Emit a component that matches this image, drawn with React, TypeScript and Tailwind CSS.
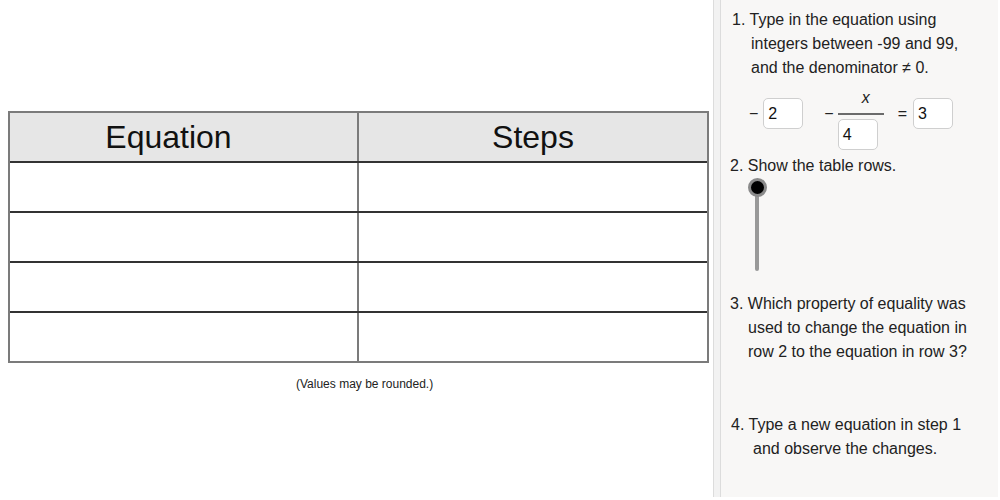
import React from "react";

const rows = [0, 1, 2, 3];

const InputBox = ({ value }: { value: string }) => (
  <div className="w-[40px] h-[31px] rounded-[5px] border border-[#cfcfcf] bg-white pl-[4px] text-[16px] leading-[29px] text-[#111]">
    {value}
  </div>
);

const App = () => {
  return (
    <div className="w-[1000px] h-[500px] bg-white flex font-['Liberation_Sans',Arial,sans-serif] text-[#222] overflow-hidden">
      {/* left graphics view */}
      <div className="w-[713px] shrink-0 pt-[111px] pl-[8px]">
        <div className="w-[701px] border-2 border-[#7b7b7b]">
          <div className="grid grid-cols-[349px_1fr] h-[50px] bg-[#e6e6e6] border-b-2 border-[#333]">
            <div className="border-r-2 border-[#7b7b7b] flex items-center justify-center pr-[30px] text-[32px] text-[#111]">
              Equation
            </div>
            <div className="flex items-center justify-center text-[32px] text-[#111]">Steps</div>
          </div>
          {rows.map((r, index) => (
            <div
              key={index}
              className={`grid grid-cols-[349px_1fr] ${index < 3 ? "h-[50px] border-b-2 border-[#333]" : "h-[48px]"}`}
            >
              <div className="border-r-2 border-[#7b7b7b]" />
              <div />
            </div>
          ))}
        </div>
        <p className="mt-[13px] pl-[288px] text-[12px] leading-[16px] text-[#222]">
          (Values may be rounded.)
        </p>
      </div>

      {/* splitter */}
      <div className="w-[8px] h-[497px] shrink-0 border-l border-r border-[#dcdcdc] bg-[#f2f2f2]" />

      {/* algebra / instructions panel */}
      <div className="w-[277px] h-[497px] shrink-0 bg-[#f8f7f6] pt-[8px] text-[16px] leading-[24px]">
        <div className="pl-[11px]">
          <p>1. Type in the equation using</p>
          <p className="pl-[19px]">integers between -99 and 99,</p>
          <p className="pl-[19px]">and the denominator ≠ 0.</p>
        </div>

        <div className="mt-[10px] h-[60px] flex items-start pl-[28px]">
          <div className="mt-[8px] h-[31px] flex items-center">−</div>
          <div className="mt-[8px] ml-[5px]">
            <InputBox value="2" />
          </div>
          <div className="mt-[8px] ml-[21px] h-[31px] flex items-center">−</div>
          <div className="ml-[4px] w-[46px] flex flex-col">
            <div className="h-[16px] pl-[24px] text-[16px] leading-[16px] italic">x</div>
            <div className="mt-[7px] h-[2px] bg-[#6b6b6b]" />
            <div className="mt-[4px]">
              <InputBox value="4" />
            </div>
          </div>
          <div className="mt-[8px] ml-[14px] h-[31px] flex items-center">=</div>
          <div className="mt-[8px] ml-[6px]">
            <InputBox value="3" />
          </div>
        </div>

        <p className="mt-[4px] pl-[9px]">2. Show the table rows.</p>

        <div className="relative ml-[27px] w-[19px] h-[93px]">
          <div className="absolute left-[7px] top-[9px] bottom-0 w-[4px] rounded-full bg-[#999]" />
          <div className="absolute left-0 top-0 w-[19px] h-[19px] rounded-full bg-black border-[3px] border-[#8a8a8a]" />
        </div>

        <div className="mt-[21px] pl-[9px]">
          <p>3. Which property of equality was</p>
          <p className="pl-[18px]">used to change the equation in</p>
          <p className="pl-[18px]">row 2 to the equation in row 3?</p>
        </div>

        <div className="mt-[49px] pl-[10px]">
          <p>4. Type a new equation in step 1</p>
          <p className="pl-[22px]">and observe the changes.</p>
        </div>
      </div>
    </div>
  );
};

export default App;
